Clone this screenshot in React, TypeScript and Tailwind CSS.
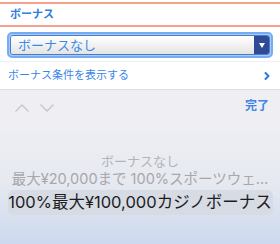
import { ChevronRight } from 'lucide-react';

export default function App() {
  return (
    <div
      className="w-[280px] h-[244px] overflow-hidden bg-white flex flex-col"
      style={{ fontFamily: 'Inter, "Noto Sans CJK JP", sans-serif' }}
    >
      {/* header */}
      <div className="pt-[2px]">
        <div className="h-[2px] bg-[#f6a08e]" />
        <div className="h-[21px] px-[10px] flex items-center">
          <span className="text-[11px] font-bold text-[#2f7de1] leading-none">ボーナス</span>
        </div>
        <div className="h-[2px] bg-[#f6a08e]" />
      </div>

      {/* select */}
      <div className="px-[7px] pt-[5px]">
        <div className="h-[26px] rounded-[5px] border-2 border-[#74acf3] p-px bg-[#a9ccf7]">
          <div className="h-full flex rounded-[3px] overflow-hidden border border-[#4d79c9]">
            <div className="flex-1 flex items-center pl-[7px] bg-gradient-to-b from-[#ffffff] to-[#e4e4e4]">
              <span className="text-[13px] text-[#3a8be6] leading-none">ボーナスなし</span>
            </div>
            <div className="w-[15px] bg-[#2f4b97] flex items-center justify-center">
              <svg width="6" height="5" viewBox="0 0 6 5">
                <path d="M0 0h6L3 5z" fill="#ffffff" />
              </svg>
            </div>
          </div>
        </div>
      </div>

      <div className="mt-[3px] h-px bg-[#eef1f4]" />

      {/* link row */}
      <div className="h-[27px] flex items-center justify-between pl-[8px] pr-[7px]">
        <span className="text-[11px] text-[#3b86e8] leading-none">ボーナス条件を表示する</span>
        <ChevronRight className="w-[12px] h-[12px] text-[#2a78e4]" strokeWidth={4} />
      </div>

      {/* toolbar */}
      <div className="h-[33px] flex items-center justify-between bg-[#efeff3] border-t border-[#dcdce1] pl-[15px] pr-[11px]">
        <div className="flex items-center gap-[11px] pt-[3px]">
          <svg width="14" height="8" viewBox="0 0 14 8" fill="none">
            <path d="M0.5 7.5L7 1L13.5 7.5" stroke="#c6c6ca" strokeWidth="1.3" />
          </svg>
          <svg width="14" height="8" viewBox="0 0 14 8" fill="none">
            <path d="M0.5 0.5L7 7L13.5 0.5" stroke="#c6c6ca" strokeWidth="1.3" />
          </svg>
        </div>
        <span className="text-[12px] font-bold text-[#3d86e6] leading-none">完了</span>
      </div>

      {/* picker */}
      <div className="flex-1 bg-gradient-to-b from-[#efeff4] via-[#e6e9f0] to-[#cdd9ee] flex flex-col items-center pt-[31px]">
        <div className="h-[16px] flex items-center text-[13px] text-[#b3b3b8] leading-none whitespace-nowrap">
          ボーナスなし
        </div>
        <div className="h-[20px] w-full flex items-center justify-center text-[14.5px] text-[#a7a7ac] leading-none whitespace-nowrap overflow-hidden">
          最大¥20,000まで 100%スポーツウェ…
        </div>
        <div className="mt-[1px] w-[265px] h-[25px] rounded-[6px] bg-[#d7dbe3] flex items-center justify-center text-[16.5px] text-[#1d1d1f] leading-none whitespace-nowrap">
          100%最大¥100,000カジノボーナス
        </div>
      </div>
    </div>
  );
}
